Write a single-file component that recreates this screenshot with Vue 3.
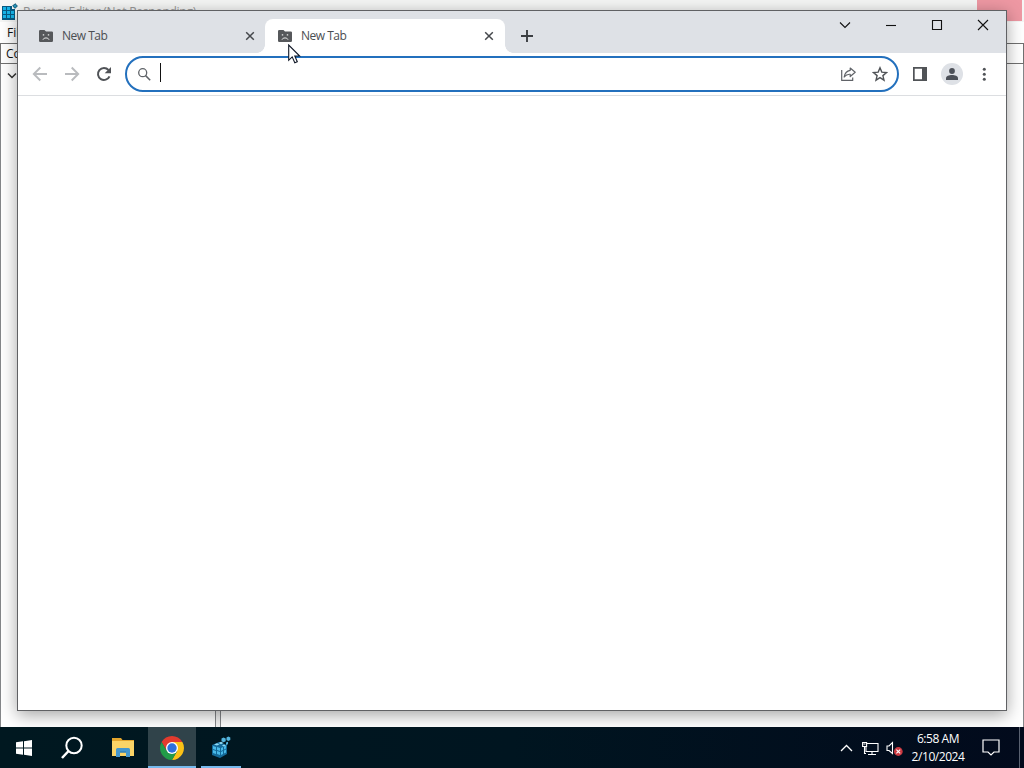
<template>
  <div class="desktop">
    <!-- Registry Editor, behind the browser -->
    <section class="regedit">
      <header class="reg-title">
        <svg class="reg-icon" width="17" height="17" viewBox="0 0 17 17">
          <path fill="#075a83" d="M1 3h10v3h3v11H1z" />
          <g fill="#16b4e8">
            <path d="M2 4h3v3H2zM6 4h3v3H6zM2 8h3v3H2zM6 8h3v3H6zM10 8h3v3h-3zM2 12h3v3H2zM6 12h3v3H6zM10 12h3v3h-3z" />
          </g>
          <path fill="#2294b9" stroke="#0b5272" d="M14 .7l2.400 2.300L14 5.300 11.700 3z" />
        </svg>
        <span class="reg-name">Registry Editor (Not Responding)</span>
        <span class="reg-close"></span>
      </header>
      <nav class="reg-menu">File</nav>
      <div class="reg-address">Computer</div>
      <div class="reg-body">
        <div class="reg-tree">
          <svg width="10" height="8" viewBox="0 0 10 8"><path d="M1 1.500l4 4 4-4" fill="none" stroke="#333" stroke-width="1.500" /></svg>
        </div>
        <div class="reg-values"></div>
      </div>
    </section>

    <!-- Browser -->
    <section class="browser">
      <header class="tab-strip">
        <div v-for="(tab, i) in tabs" :key="i" class="tab" :class="{ active: tab.active }">
          <svg class="tab-icon" width="14" height="12" viewBox="0 0 14 12">
            <path fill="#56585b" d="M1.200 0h4.300L7 1.400h5.800q1.200 0 1.200 1.200v8.200q0 1.200-1.200 1.200H1.200Q0 12 0 10.800V1.200Q0 0 1.200 0z" />
            <path fill="#eee" d="M3.800 4.200h1.400v1.400H3.800zM8.800 4.200h1.400v1.400H8.800z" />
            <path d="M4 9.600c.8-2.200 5.200-2.200 6 0" fill="none" stroke="#eee" stroke-width="1" />
          </svg>
          <span class="tab-title">{{ tab.title }}</span>
          <svg class="tab-close" width="10" height="10" viewBox="0 0 10 10"><path d="M1.200 1.200l7.600 7.600M8.800 1.200L1.200 8.800" stroke="#45484c" stroke-width="1.500" /></svg>
        </div>
        <button class="new-tab">
          <svg width="12" height="12" viewBox="0 0 12 12"><path d="M6 0v12M0 6h12" stroke="#3b3e42" stroke-width="1.900" /></svg>
        </button>
        <div class="window-buttons">
          <button v-for="(d, i) in windowIcons" :key="i">
            <svg width="12" height="12" viewBox="0 0 12 12"><path :d="d" fill="none" stroke="#111" stroke-width="1.100" /></svg>
          </button>
        </div>
      </header>

      <div class="toolbar">
        <button class="tool">
          <svg width="16" height="16" viewBox="0 0 16 16"><path d="M15 8H2M8.300 1.500L1.800 8l6.500 6.500" fill="none" stroke="#b9bbbe" stroke-width="1.900" /></svg>
        </button>
        <button class="tool">
          <svg width="16" height="16" viewBox="0 0 16 16"><path d="M1 8h13M7.700 1.500L14.200 8l-6.500 6.500" fill="none" stroke="#b9bbbe" stroke-width="1.900" /></svg>
        </button>
        <button class="tool">
          <svg width="16" height="16" viewBox="0 0 16 16">
            <path d="M13.500 10.300A6 6 0 1 1 12.500 4" fill="none" stroke="#505357" stroke-width="2" />
            <path d="M15 1v6.300H8.700z" fill="#505357" />
          </svg>
        </button>
        <div class="omnibox">
          <svg class="lens" width="13" height="13" viewBox="0 0 13 13"><circle cx="4.700" cy="4.700" r="4" fill="none" stroke="#5f6368" stroke-width="1.300" /><path d="M7.600 7.600l4.600 4.600" stroke="#5f6368" stroke-width="1.500" /></svg>
          <span class="caret"></span>
          <button class="tool share">
            <svg width="16" height="16" viewBox="0 0 16 16" fill="none" stroke="#606368" stroke-width="1.200" stroke-linejoin="round">
              <path d="M1.700 4v10.400h11V11.500" />
              <path d="M10.200 2l5 4.300-5 4.200V8.300C7.500 8 5.800 9 4.200 11c.5-3.600 2.500-6.100 6-6.700z" />
            </svg>
          </button>
          <button class="tool">
            <svg width="16" height="16" viewBox="0 0 16 16"><path d="M8 1.800l1.800 4.300 4.700.4-3.600 3.100 1.100 4.600L8 11.700l-4 2.500 1.100-4.600-3.600-3.100 4.700-.4z" fill="none" stroke="#505357" stroke-width="1.400" /></svg>
          </button>
        </div>
        <button class="tool side-panel">
          <svg width="14" height="14" viewBox="0 0 14 14">
            <path fill="#505357" fill-rule="evenodd" d="M0 0h14v14H0zM1.700 1.700v10.600h7.300V1.700z" />
          </svg>
        </button>
        <button class="tool">
          <span class="avatar">
            <svg width="12" height="12" viewBox="0 0 12 12" fill="#4c5058"><circle cx="6" cy="3" r="2.900" /><path d="M0 12v-1.600C0 6 12 6 12 10.400V12z" /></svg>
          </span>
        </button>
        <button class="tool">
          <svg width="4" height="14" viewBox="0 0 4 14" fill="#505357"><circle cx="2.300" cy="2.200" r="1.500" /><circle cx="2.300" cy="7.200" r="1.500" /><circle cx="2.300" cy="12.200" r="1.500" /></svg>
        </button>
      </div>
      <main class="page"></main>
    </section>

    <footer class="taskbar">
      <button class="task">
        <svg width="16" height="16" viewBox="0 0 16 16" fill="#fff"><path d="M0 2.300L7 1.300v6.300H0zM8 1.200L16 0v7.600H8zM0 8.500h7v6.300l-7-1zM8 8.500h8V16l-8-1.200z" /></svg>
      </button>
      <button class="task">
        <svg width="24" height="24" viewBox="0 0 24 24" fill="none" stroke="#fff" stroke-width="2"><circle cx="14" cy="9.500" r="7.700" /><path d="M8.600 15L2 22" stroke-width="2.500" /></svg>
      </button>
      <button class="task explorer">
        <svg width="22" height="19" viewBox="0 0 22 19">
          <path fill="#e4a62d" d="M0 0h9l1.500 2H22v16H0z" />
          <path fill="#fbd467" d="M0 3h22v15H0z" />
          <path fill="#4597ce" d="M4 19v-7.500q0-1.500 1.500-1.500h11q1.500 0 1.500 1.500V19h-4v-4.500H8V19z" />
          <path fill="#2775ad" d="M8 13.500h6v1H8z" />
        </svg>
      </button>
      <button class="task current">
        <svg width="24" height="24" viewBox="0 0 24 24">
          <path fill="#e33b2e" d="M1.610 6A12 12 0 0 1 22.390 6H12L6.800 15z" />
          <path fill="#fbc116" d="M22.390 6A12 12 0 0 1 12 24l5.200-9L12 6z" />
          <path fill="#229b48" d="M12 24A12 12 0 0 1 1.610 6L6.800 15 12 18l5.200-3z" />
          <circle cx="12" cy="12" r="6" fill="#fff" />
          <circle cx="12" cy="12" r="4.700" fill="#2d70dd" />
        </svg>
      </button>
      <button class="task running">
        <svg width="20" height="23" viewBox="0 0 20 23">
          <path fill="#146998" d="M1 9l7-3 8 3v9l-7 4-8-3z" />
          <path fill="#48b9e8" d="M2 10l3 1v3l-3-1zM6 11l3 1v3l-3-1zM2 14l3 1v3l-3-1zM6 15l3 1v3l-3-1zM10 12l2-1v3l-2 1zM13 10.500l2-1v3l-2 1zM10 16l2-1v3l-2 1zM13 14.500l2-1v3l-2 1z" />
          <path fill="#8ed9f4" d="M3 8.500l3-1.300 2.500 1.100L6 9.600zM7.500 7l2.500-1.200L12.500 7 10 8.200zM11 9.500l2-1 2 1-2.500 1z" />
          <path fill="#54b6df" d="M10.500 2.500l2-1 2.200 1v2.700l-2.200 1-2-1zM15.500 1.500l1.800-1 2 1v2.500l-2 1-1.800-1zM15 6.500l2-.8v2.500l-2 .8z" />
        </svg>
      </button>

      <div class="tray">
        <svg class="chevron" width="13" height="8" viewBox="0 0 13 8"><path d="M1 7l5.500-5.500L12 7" fill="none" stroke="#fff" stroke-width="1.300" /></svg>
        <svg class="network" width="17" height="15" viewBox="0 0 17 15" fill="none" stroke="#fff" stroke-width="1.100"><path d="M5 2.500h11v8H4V6M10 10.500v3M6 13.500h8M2.500 5.500v7H4M.6 1.500h4v4h-4zM1.500 3h2" /></svg>
        <svg class="volume" width="17" height="16" viewBox="0 0 17 16">
          <path d="M1 5h2l3.500-3.500v11L3 9.500H1z" fill="none" stroke="#fff" stroke-width="1.100" />
          <circle cx="12.300" cy="10.500" r="4.400" fill="#cc3941" />
          <path d="M10.400 8.600l3.800 3.800M14.200 8.600l-3.800 3.800" stroke="#fff" stroke-width="1.100" />
        </svg>
        <div class="clock">
          <span>6:58 AM</span>
          <span>2/10/2024</span>
        </div>
        <svg class="notice" width="18" height="17" viewBox="0 0 18 17"><path d="M1 1h16v12h-5l-3 3-3-3H1z" fill="none" stroke="#fff" stroke-width="1.200" /></svg>
        <span class="show-desktop"></span>
      </div>
    </footer>

    <svg class="cursor" width="13" height="20" viewBox="0 0 13 20"><path d="M.7 1v15.300l3.500-3.400 2.600 5.900 2.500-1.100-2.500-5.700h4.900z" fill="#fff" stroke="#111827" stroke-width="1.100" /></svg>
  </div>
</template>

<script setup>
import { ref } from 'vue';

const tabs = ref([
  { title: 'New Tab', active: false },
  { title: 'New Tab', active: true }
]);

// tab search, minimize, maximize, close
const windowIcons = [
  'M1 3.500l5 5 5-5',
  'M1 6.500h10',
  'M1.500 1.500h9v9h-9z',
  'M1 1l10 10M11 1L1 11'
];
</script>

<style>
body {
  margin: 0;
  overflow: hidden;
}
</style>

<style scoped>
.desktop {
  position: relative;
  width: 1024px;
  height: 768px;
  overflow: hidden;
  display: flex;
  flex-direction: column;
  font-family: "Open Sans", "Noto Sans", sans-serif;
  font-size: 12px;
  color: #111;
}
svg {
  display: block;
  flex: none;
}
button {
  padding: 0;
  border: none;
  background: transparent;
  display: flex;
  align-items: center;
  justify-content: center;
  flex: none;
}
.regedit {
  height: 727px;
  display: flex;
  flex-direction: column;
  background: #fff;
}
.reg-title {
  height: 22px;
  display: flex;
  background: #f5f6f5;
}
.reg-icon {
  margin: 3px 0 0 1px;
}
.reg-name {
  margin: 4px 0 0 5px;
  line-height: 16px;
  letter-spacing: -0.25px;
  color: #999;
}
.reg-close {
  width: 45px;
  height: 21px;
  margin: 0 2px 0 auto;
  background: #ee98a3;
}
.reg-menu {
  height: 21px;
  padding-left: 7px;
  line-height: 22px;
}
.reg-address {
  height: 19px;
  padding-left: 5px;
  line-height: 19px;
  border: 1px solid #707070;
}
.reg-body {
  flex: 1;
  display: flex;
  gap: 4px;
  background: #f1f1f1;
}
.reg-tree {
  width: 214px;
  border: 1px solid #85878a;
  border-width: 0 1px;
  background: #fff;
}
.reg-tree svg {
  margin: 8px 0 0 6px;
}
.reg-values {
  flex: 1;
  border: 1px solid #85878a;
  border-width: 0 1px;
  background: #fff;
}
.browser {
  position: absolute;
  left: 17px;
  top: 10px;
  width: 988px;
  height: 699px;
  display: flex;
  flex-direction: column;
  border: 1px solid #606164;
  background: #fff;
  box-shadow: 0 4px 16px rgba(0, 0, 0, 0.36);
}
.tab-strip {
  height: 42px;
  display: flex;
  align-items: flex-end;
  background: #dee1e6;
}
.tab {
  width: 205px;
  height: 34px;
  padding: 0 14px 0 13px;
  margin-left: 8px;
  display: flex;
  align-items: center;
  box-sizing: content-box;
}
.tab:first-child {
  width: 213px;
  padding-right: 13px;
}
.tab.active {
  position: relative;
  width: 213px;
  margin-left: 0;
  border-radius: 8px 8px 0 0;
  background: #fff;
}
.tab.active::before,
.tab.active::after {
  content: "";
  position: absolute;
  bottom: 0;
  width: 8px;
  height: 8px;
}
.tab.active::before {
  left: -8px;
  background: radial-gradient(circle at 0 0, transparent 7.5px, #fff 8px);
}
.tab.active::after {
  right: -8px;
  background: radial-gradient(circle at 100% 0, transparent 7.5px, #fff 8px);
}
.tab-title {
  flex: 1;
  margin-left: 9px;
  line-height: 16px;
  letter-spacing: -0.5px;
  color: #4b4e52;
}
.tab-close {
  margin-right: -3px;
}
.new-tab {
  width: 28px;
  height: 34px;
  margin-left: 8px;
}
.window-buttons {
  display: flex;
  align-self: flex-start;
  margin-left: auto;
}
.window-buttons button {
  width: 46px;
  height: 28px;
}
.toolbar {
  height: 42px;
  display: flex;
  align-items: center;
  padding: 0 6px;
  border-bottom: 1px solid #dcdee1;
}
.tool {
  width: 32px;
  height: 32px;
}
.omnibox {
  width: 774px;
  height: 36px;
  box-sizing: border-box;
  margin-left: 5px;
  padding: 0 1px 0 11px;
  display: flex;
  align-items: center;
  border: 2px solid #2370bd;
  border-radius: 18px;
}
.caret {
  width: 1px;
  height: 19px;
  margin: -3px 0 0 9px;
  background: #111;
}
.share {
  margin-left: auto;
}
.side-panel {
  margin-left: 5px;
}
.avatar {
  width: 22px;
  height: 22px;
  display: flex;
  align-items: center;
  justify-content: center;
  border-radius: 50%;
  background: #dee1e6;
}
.page {
  flex: 1;
}
.taskbar {
  position: relative;
  height: 41px;
  display: flex;
  background: linear-gradient(90deg, #001820, #001520 50%, #020a1c);
}
.task {
  width: 48px;
  height: 41px;
}
.explorer {
  margin: 0 1px 0 3px;
  width: 47px;
  padding-bottom: 0;
}
.current {
  margin-left: 1px;
  background: #30434a;
  box-shadow: inset 0 -2px #76b9ed;
}
.running {
  width: 40px;
  margin-left: 5px;
  box-shadow: inset 0 -2px #76b9ed;
}
.tray {
  display: flex;
  align-items: center;
  margin-left: auto;
  color: #fff;
}
.network {
  margin: 1px 0 0 9px;
}
.volume {
  margin: 2px 0 0 7px;
}
.clock {
  width: 62px;
  margin: 0 13px 0 4px;
  display: flex;
  flex-direction: column;
  line-height: 18px;
  text-align: center;
  letter-spacing: -0.45px;
}
.show-desktop {
  width: 4px;
  height: 41px;
  margin-left: 19px;
  border-left: 1px solid #596170;
}
.cursor {
  position: absolute;
  left: 288px;
  top: 44px;
}
</style>
